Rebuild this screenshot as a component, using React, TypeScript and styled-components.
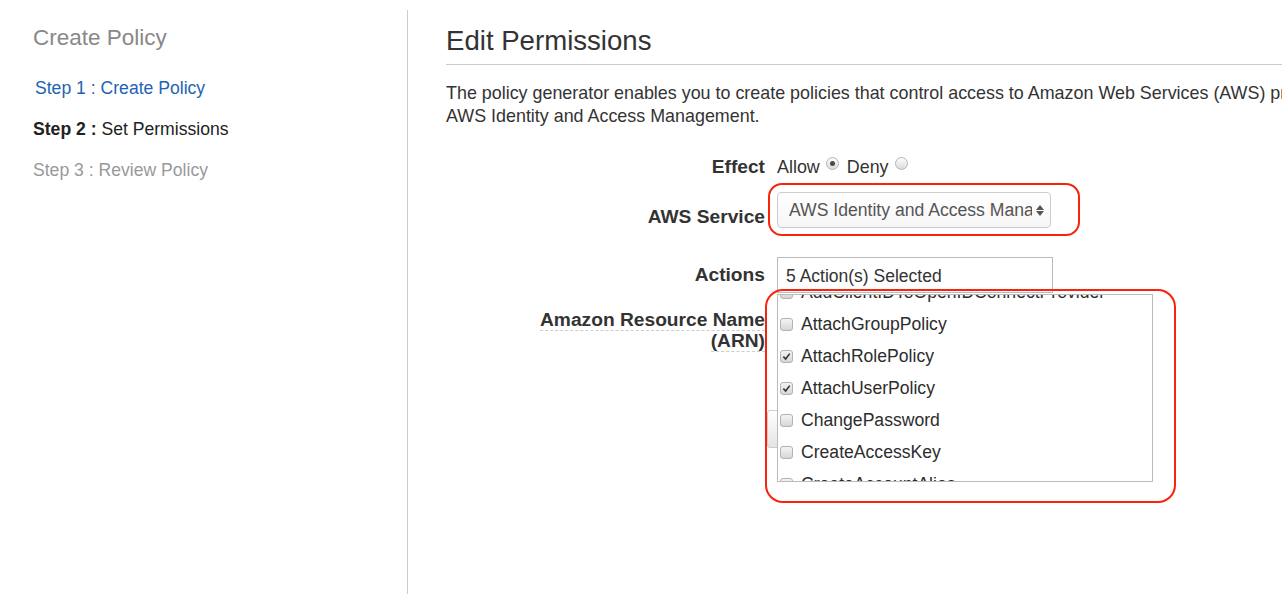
import React from "react";
import styled, { createGlobalStyle } from "styled-components";

const Global = createGlobalStyle`
  html, body { margin: 0; padding: 0; overflow: hidden; background: #fff; }
  body { font-family: "Liberation Sans", Arial, Helvetica, sans-serif; color: #333; }
`;

const Page = styled.div`
  display: flex;
  padding-top: 10px;
  height: 594px;
  box-sizing: border-box;
  width: 1282px;
  overflow: hidden;
`;

const Sidebar = styled.nav`
  width: 408px;
  flex: none;
  border-right: 1px solid #ccc;
  padding: 15px 0 0 33px;
  box-sizing: border-box;
`;

const SideTitle = styled.div`
  font-size: 22.5px;
  line-height: 26px;
  color: #888;
  margin-bottom: 27px;
`;

const StepList = styled.div`
  display: flex;
  flex-direction: column;
  gap: 21px;
`;

const Step = styled.div<{ $state: "link" | "current" | "todo" }>`
  font-size: 17.6px;
  line-height: 20px;
  padding-left: ${(p) => (p.$state === "link" ? "2px" : "0")};
  color: ${(p) => (p.$state === "link" ? "#1d64b4" : p.$state === "current" ? "#222" : "#999")};
  b { font-weight: bold; }
`;

const Main = styled.main`
  flex: 1;
  padding: 16px 0 0 38px;
  min-width: 0;
  overflow: hidden;
`;

const Heading = styled.h1`
  margin: 0;
  font-size: 27.6px;
  line-height: 30px;
  font-weight: normal;
  color: #333;
`;

const Rule = styled.hr`
  border: none;
  border-top: 1px solid #ccc;
  margin: 8px 0 0 0;
  width: 1000px;
`;

const Intro = styled.p`
  margin: 17px 0 0 0;
  font-size: 17.9px;
  line-height: 23px;
  white-space: nowrap;
  color: #333;
`;

const Row = styled.div<{ $top: number }>`
  display: flex;
  align-items: flex-start;
  margin-top: ${(p) => p.$top}px;
  position: relative;
`;

const Label = styled.div<{ $pad?: number }>`
  width: 319px;
  flex: none;
  text-align: right;
  font-weight: bold;
  font-size: 19.2px;
  line-height: 22px;
  color: #333;
  padding-top: ${(p) => p.$pad ?? 0}px;
`;

const ArnLabel = styled(Label)`
  line-height: 21px;
  span {
    border-bottom: 1px dashed #ccc;
  }
`;

const Control = styled.div`
  margin-left: 12px;
  position: relative;
  flex: 1;
`;

const RadioGroup = styled.div`
  display: flex;
  align-items: center;
  font-size: 17.9px;
  line-height: 22px;
  color: #333;
`;

const RadioText = styled.span`
  margin-right: 6px;
`;

const Radio = styled.span<{ $on?: boolean }>`
  width: 13px;
  height: 13px;
  box-sizing: border-box;
  border-radius: 50%;
  border: 1px solid #b4b4b4;
  background: linear-gradient(#fdfdfd, #dcdcdc);
  display: inline-flex;
  align-items: center;
  justify-content: center;
  position: relative;
  top: -4px;
  margin-right: 8px;
  &::after {
    content: "";
    display: ${(p) => (p.$on ? "block" : "none")};
    width: 5px;
    height: 5px;
    border-radius: 50%;
    background: #4a4a4a;
  }
`;

const Select = styled.div`
  width: 274px;
  height: 36px;
  box-sizing: border-box;
  border: 1px solid #ccc;
  border-radius: 4px;
  background: linear-gradient(#ffffff, #f6f6f6);
  display: flex;
  align-items: center;
  padding: 0 6px 0 11px;
  font-size: 17.6px;
  color: #555;
`;

const SelectText = styled.span`
  flex: 1;
  overflow: hidden;
  white-space: nowrap;
`;

const Arrows = styled.span`
  display: flex;
  flex-direction: column;
  gap: 1px;
  margin-left: 4px;
  &::before, &::after {
    content: "";
    display: block;
    border-left: 4px solid transparent;
    border-right: 4px solid transparent;
  }
  &::before { border-bottom: 5px solid #555; }
  &::after { border-top: 5px solid #555; }
`;

const Annotation = styled.div<{ $l: number; $t: number; $w: number; $h: number; $r: number }>`
  position: absolute;
  left: ${(p) => p.$l}px;
  top: ${(p) => p.$t}px;
  width: ${(p) => p.$w}px;
  height: ${(p) => p.$h}px;
  border: 2.5px solid #f7230c;
  border-radius: ${(p) => p.$r}px;
  box-sizing: border-box;
  pointer-events: none;
  z-index: 5;
`;

const TextBox = styled.div`
  width: 276px;
  height: 36px;
  box-sizing: border-box;
  border: 1px solid #bbb;
  padding: 0 8px;
  display: flex;
  align-items: center;
  font-size: 17.5px;
  color: #333;
  padding-top: 2px;
  white-space: nowrap;
`;

const Dropdown = styled.div`
  position: absolute;
  left: 0;
  top: 37px;
  width: 376px;
  height: 188px;
  box-sizing: border-box;
  border: 1px solid #bbb;
  background: #fff;
  overflow: hidden;
  z-index: 3;
`;

const DropdownInner = styled.div`
  margin-top: -19px;
`;

const Option = styled.div`
  height: 32px;
  display: flex;
  align-items: center;
  padding-left: 2px;
  gap: 8px;
  font-size: 17.6px;
  color: #2d2d2d;
  white-space: nowrap;
`;

const Check = styled.span`
  width: 13px;
  height: 13px;
  box-sizing: border-box;
  border: 1px solid #b2b2b2;
  border-radius: 3px;
  background: linear-gradient(#f4f4f4, #d6d6d6);
  display: inline-flex;
  align-items: center;
  justify-content: center;
  flex: none;
`;

const Ghost = styled.div`
  margin: 101px 0 0 -10px;
  width: 120px;
  height: 38px;
  box-sizing: border-box;
  border: 1px solid #ccc;
  border-radius: 3px 0 0 3px;
  background: linear-gradient(#ffffff, #e4e4e4);
`;

const actions: { name: string; checked: boolean }[] = [
  { name: "AddClientIDToOpenIDConnectProvider", checked: false },
  { name: "AttachGroupPolicy", checked: false },
  { name: "AttachRolePolicy", checked: true },
  { name: "AttachUserPolicy", checked: true },
  { name: "ChangePassword", checked: false },
  { name: "CreateAccessKey", checked: false },
  { name: "CreateAccountAlias", checked: false },
];

export default function App() {
  return (
    <>
      <Global />
      <Page>
        <Sidebar>
          <SideTitle>Create Policy</SideTitle>
          <StepList>
            <Step $state="link">Step 1 : Create Policy</Step>
            <Step $state="current">
              <b>Step 2 :</b> Set Permissions
            </Step>
            <Step $state="todo">Step 3 : Review Policy</Step>
          </StepList>
        </Sidebar>
        <Main>
          <Heading>Edit Permissions</Heading>
          <Rule />
          <Intro>
            The policy generator enables you to create policies that control access to Amazon Web Services (AWS) products and resources. For more information about creating policies, see Overview of Policies in Using
            <br />
            AWS Identity and Access Management.
          </Intro>

          <Row $top={28}>
            <Label>Effect</Label>
            <Control>
              <RadioGroup>
                <RadioText>Allow</RadioText>
                <Radio $on />
                <RadioText>Deny</RadioText>
                <Radio />
              </RadioGroup>
            </Control>
          </Row>

          <Row $top={14}>
            <Label $pad={14}>AWS Service</Label>
            <Control>
              <Select>
                <SelectText>AWS Identity and Access Management</SelectText>
                <Arrows />
              </Select>
              <Annotation $l={-9} $t={-9} $w={312} $h={53} $r={14} />
            </Control>
          </Row>

          <Row $top={29}>
            <Label $pad={7}>Actions</Label>
            <Control>
              <TextBox>5 Action(s) Selected</TextBox>
              <Dropdown>
                <DropdownInner>
                  {actions.map((a) => (
                    <Option key={a.name}>
                      <Check>
                        {a.checked && (
                          <svg width="9" height="9" viewBox="0 0 10 10">
                            <path d="M1.5 5.2 L4 7.8 L8.6 1.8" fill="none" stroke="#333" strokeWidth="1.8" />
                          </svg>
                        )}
                      </Check>
                      {a.name}
                    </Option>
                  ))}
                </DropdownInner>
              </Dropdown>
              <Annotation $l={-12} $t={32} $w={411} $h={214} $r={18} />
            </Control>
          </Row>

          <Row $top={16}>
            <ArnLabel>
              <span>Amazon Resource Name</span>
              <br />
              <span>(ARN)</span>
            </ArnLabel>
            <Control>
              <Ghost />
            </Control>
          </Row>
        </Main>
      </Page>
    </>
  );
}
